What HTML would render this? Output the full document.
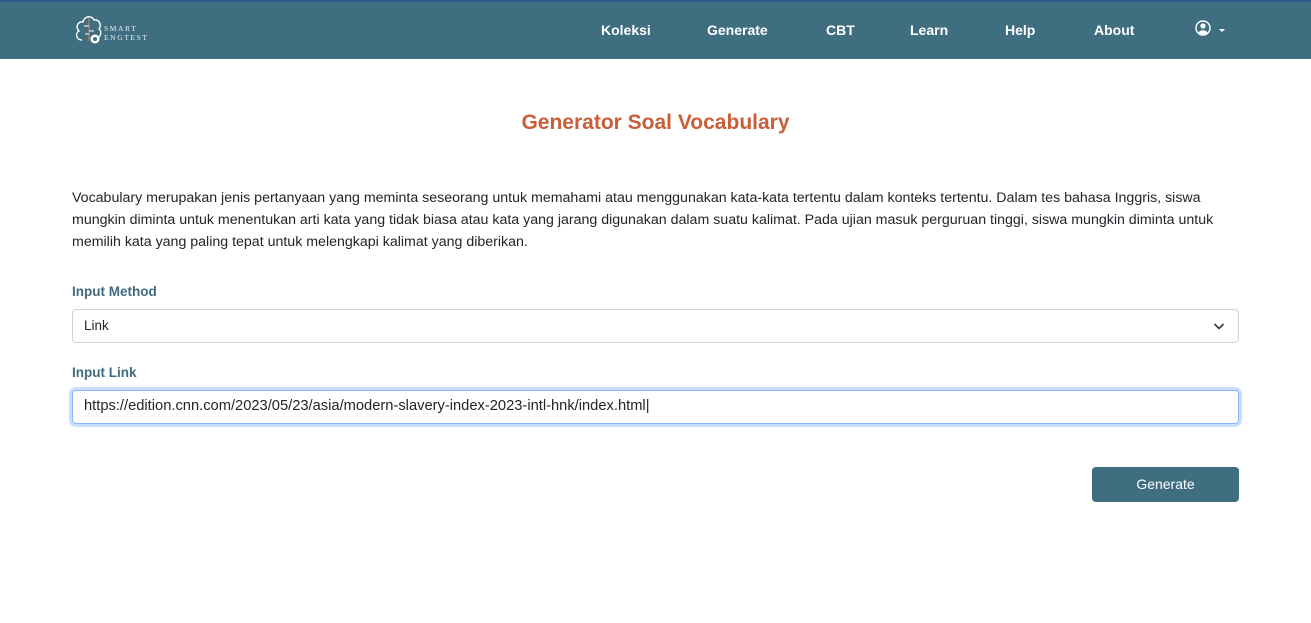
<!DOCTYPE html>
<html><head><meta charset="utf-8"><style>
*{box-sizing:border-box;margin:0;padding:0}
body{width:1311px;height:623px;background:#fff;font-family:"Liberation Sans",sans-serif;color:#212529;overflow:hidden;position:relative}
.nav{position:absolute;left:0;top:0;width:1311px;height:59px;background:#406e81;border-top:2px solid #2a5a86}
.nav a{position:absolute;top:20px;color:#fff;font-weight:bold;font-size:14px;text-decoration:none}
.logo{position:absolute;left:74px;top:11px}
.logo span{position:absolute;left:30px;font-family:"Liberation Serif",serif;font-size:7.5px;color:#e6eef2;letter-spacing:1.6px}
h1{position:absolute;left:0;width:1311px;text-align:center;top:111px;font-size:21px;color:#c95f38;font-weight:bold}
p{position:absolute;left:72px;top:187px;font-size:14.2px;line-height:22px;white-space:nowrap;color:#212529}
label{position:absolute;left:72px;font-size:13.5px;font-weight:bold;color:#3e6b7f}
.box{position:absolute;left:72px;width:1167px;height:34px;border:1px solid #ced4da;border-radius:4px;font-size:13.5px;padding:8px 11px;color:#212529}
.focus{border-color:#86b7fe;box-shadow:0 0 0 3px rgba(13,110,253,.22);font-size:14.7px;padding-top:7px}
.btn{position:absolute;left:1092px;top:467px;width:147px;height:35px;background:#406e81;color:#fff;border-radius:4px;font-size:14px;text-align:center;line-height:35px}
</style></head><body>
<div class="nav">
 <div class="logo">
  <svg width="30" height="34" viewBox="0 0 30 34"><path d="M8 27 C2 27 1 20 5 18 C1 14 4 8 9 9 C10 3 18 2 20 7 C25 6 28 12 25 16 C29 19 26 26 20 26" fill="none" stroke="#fff" stroke-width="1.4"/><path d="M15 5 V28" stroke="#d08050" stroke-width="1"/><path d="M10 13 H15 M15 18 H20 M11 21 H15" stroke="#fff" stroke-width="1"/><circle cx="21" cy="26" r="4.5" fill="#fff"/><circle cx="21" cy="26" r="2" fill="#406e81"/></svg>
  <span style="top:11px">SMART</span><span style="top:20px">ENGTEST</span>
 </div>
 <a style="left:601px">Koleksi</a><a style="left:707px">Generate</a><a style="left:826px">CBT</a><a style="left:910px">Learn</a><a style="left:1005px">Help</a><a style="left:1094px">About</a>
 <svg style="position:absolute;left:1195px;top:18px" width="34" height="18" viewBox="0 0 34 18"><circle cx="8" cy="8" r="7" fill="none" stroke="#fff" stroke-width="1.4"/><circle cx="8" cy="6" r="2.6" fill="#fff"/><path d="M3.5 12.5 C5 9.5 11 9.5 12.5 12.5 C10 15 6 15 3.5 12.5Z" fill="#fff"/><path d="M24 9 H30 L27 12Z" fill="#fff"/></svg>
</div>
<h1>Generator Soal Vocabulary</h1>
<p>Vocabulary merupakan jenis pertanyaan yang meminta seseorang untuk memahami atau menggunakan kata-kata tertentu dalam konteks tertentu. Dalam tes bahasa Inggris, siswa<br>mungkin diminta untuk menentukan arti kata yang tidak biasa atau kata yang jarang digunakan dalam suatu kalimat. Pada ujian masuk perguruan tinggi, siswa mungkin diminta untuk<br>memilih kata yang paling tepat untuk melengkapi kalimat yang diberikan.</p>
<label style="top:284px">Input Method</label>
<div class="box" style="top:309px">Link<svg style="position:absolute;right:13px;top:12px" width="12" height="9" viewBox="0 0 12 9"><path d="M1.5 2 L6 6.5 L10.5 2" fill="none" stroke="#343a40" stroke-width="1.6"/></svg></div>
<label style="top:365px">Input Link</label>
<div class="box focus" style="top:390px">https://edition.cnn.com/2023/05/23/asia/modern-slavery-index-2023-intl-hnk/index.html|</div>
<div class="btn">Generate</div>
</body></html>
